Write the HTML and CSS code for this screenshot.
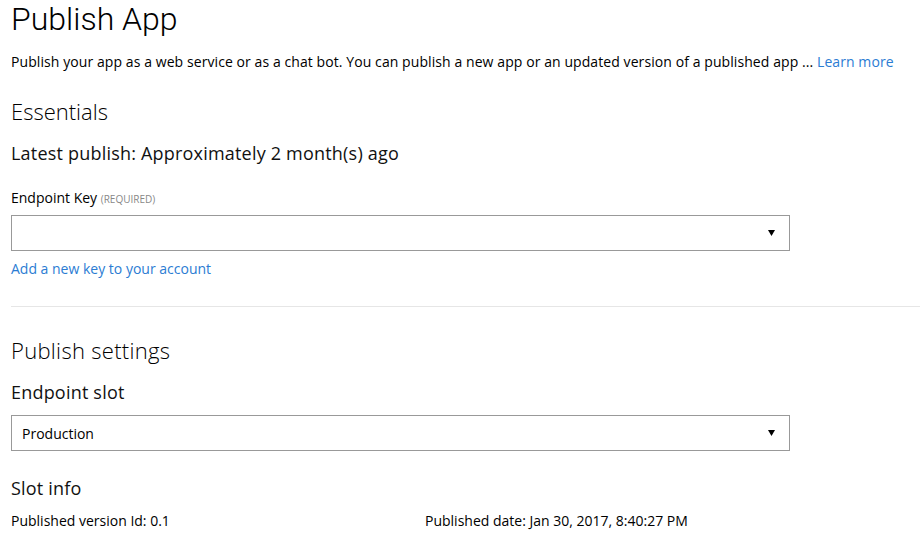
FILE: index.html
```html
<!DOCTYPE html>
<html lang="en">
<head>
<meta charset="utf-8">
<title>Publish App</title>
<link rel="stylesheet" href="styles.css">
</head>
<body>
<main class="page">
  <h1 class="title">Publish App</h1>
  <p class="desc">Publish your app as a web service or as a chat bot. You can publish a new app or an updated version of a published app ... <a class="link" href="#">Learn more</a></p>

  <h2 class="section essentials">Essentials</h2>
  <div class="subhead latest">Latest publish: Approximately 2 month(s) ago</div>

  <label class="field-label">Endpoint Key <span class="req">(REQUIRED)</span></label>
  <div class="select key-select">
    <span class="select-value"></span>
    <svg class="caret" width="7" height="6" viewBox="0 0 7 6"><path d="M0 0H7L3.5 6Z" fill="#000"/></svg>
  </div>
  <a class="link add-key" href="#">Add a new key to your account</a>

  <hr class="divider">

  <h2 class="section settings">Publish settings</h2>
  <div class="subhead slot">Endpoint slot</div>
  <div class="select slot-select">
    <span class="select-value">Production</span>
    <svg class="caret" width="7" height="6" viewBox="0 0 7 6"><path d="M0 0H7L3.5 6Z" fill="#000"/></svg>
  </div>

  <div class="subhead slot-info">Slot info</div>
  <div class="info-row">
    <span>Published version Id: 0.1</span>
    <span>Published date: Jan 30, 2017, 8:40:27 PM</span>
  </div>
</main>
</body>
</html>
```

FILE: styles.css
```css
html, body {
  margin: 0;
  padding: 0;
  background: #fff;
}
body {
  font-family: "Open Sans", "Noto Sans", sans-serif;
  color: #000;
}
.page {
  padding: 0 0 0 11px;
  display: flex;
  flex-direction: column;
  align-items: flex-start;
}
.title {
  margin: 0;
  font-family: Roboto, "Open Sans", sans-serif;
  font-size: 32px;
  font-weight: 300;
  line-height: 38px;
}
.desc {
  margin: 14px 0 0;
  font-size: 14px;
  line-height: 20px;
  letter-spacing: 0.08px;
}
.link {
  color: #2b7cd3;
  text-decoration: none;
}
.section {
  margin: 0;
  font-size: 22px;
  font-weight: 300;
  line-height: 30px;
}
.essentials { margin-top: 24px; }
.settings { margin-top: 28px; letter-spacing: 0.3px; }
.subhead {
  font-size: 18px;
  line-height: 24px;
  font-weight: 400;
  letter-spacing: 0.2px;
  color: #111;
}
.latest { margin-top: 15px; }
.slot { margin-top: 15px; }
.slot-info { margin-top: 25px; }
.field-label {
  margin-top: 23px;
  font-size: 14px;
  line-height: 20px;
}
.req {
  font-size: 10px;
  color: #888;
}
.select {
  box-sizing: border-box;
  width: 779px;
  height: 36px;
  border: 1px solid #999;
  display: flex;
  align-items: center;
  justify-content: space-between;
  padding: 0 14px 0 10px;
  font-size: 14px;
}
.key-select { margin-top: 6px; }
.slot-select { margin-top: 11px; }
.caret { display: block; }
.add-key {
  margin-top: 8px;
  font-size: 14px;
  line-height: 20px;
}
.divider {
  align-self: stretch;
  margin: 27px 0 0;
  border: 0;
  border-top: 1px solid #e6e6e6;
  height: 0;
}
.info-row {
  margin-top: 11px;
  display: grid;
  grid-template-columns: 414px auto;
  font-size: 14px;
  line-height: 20px;
}
```
